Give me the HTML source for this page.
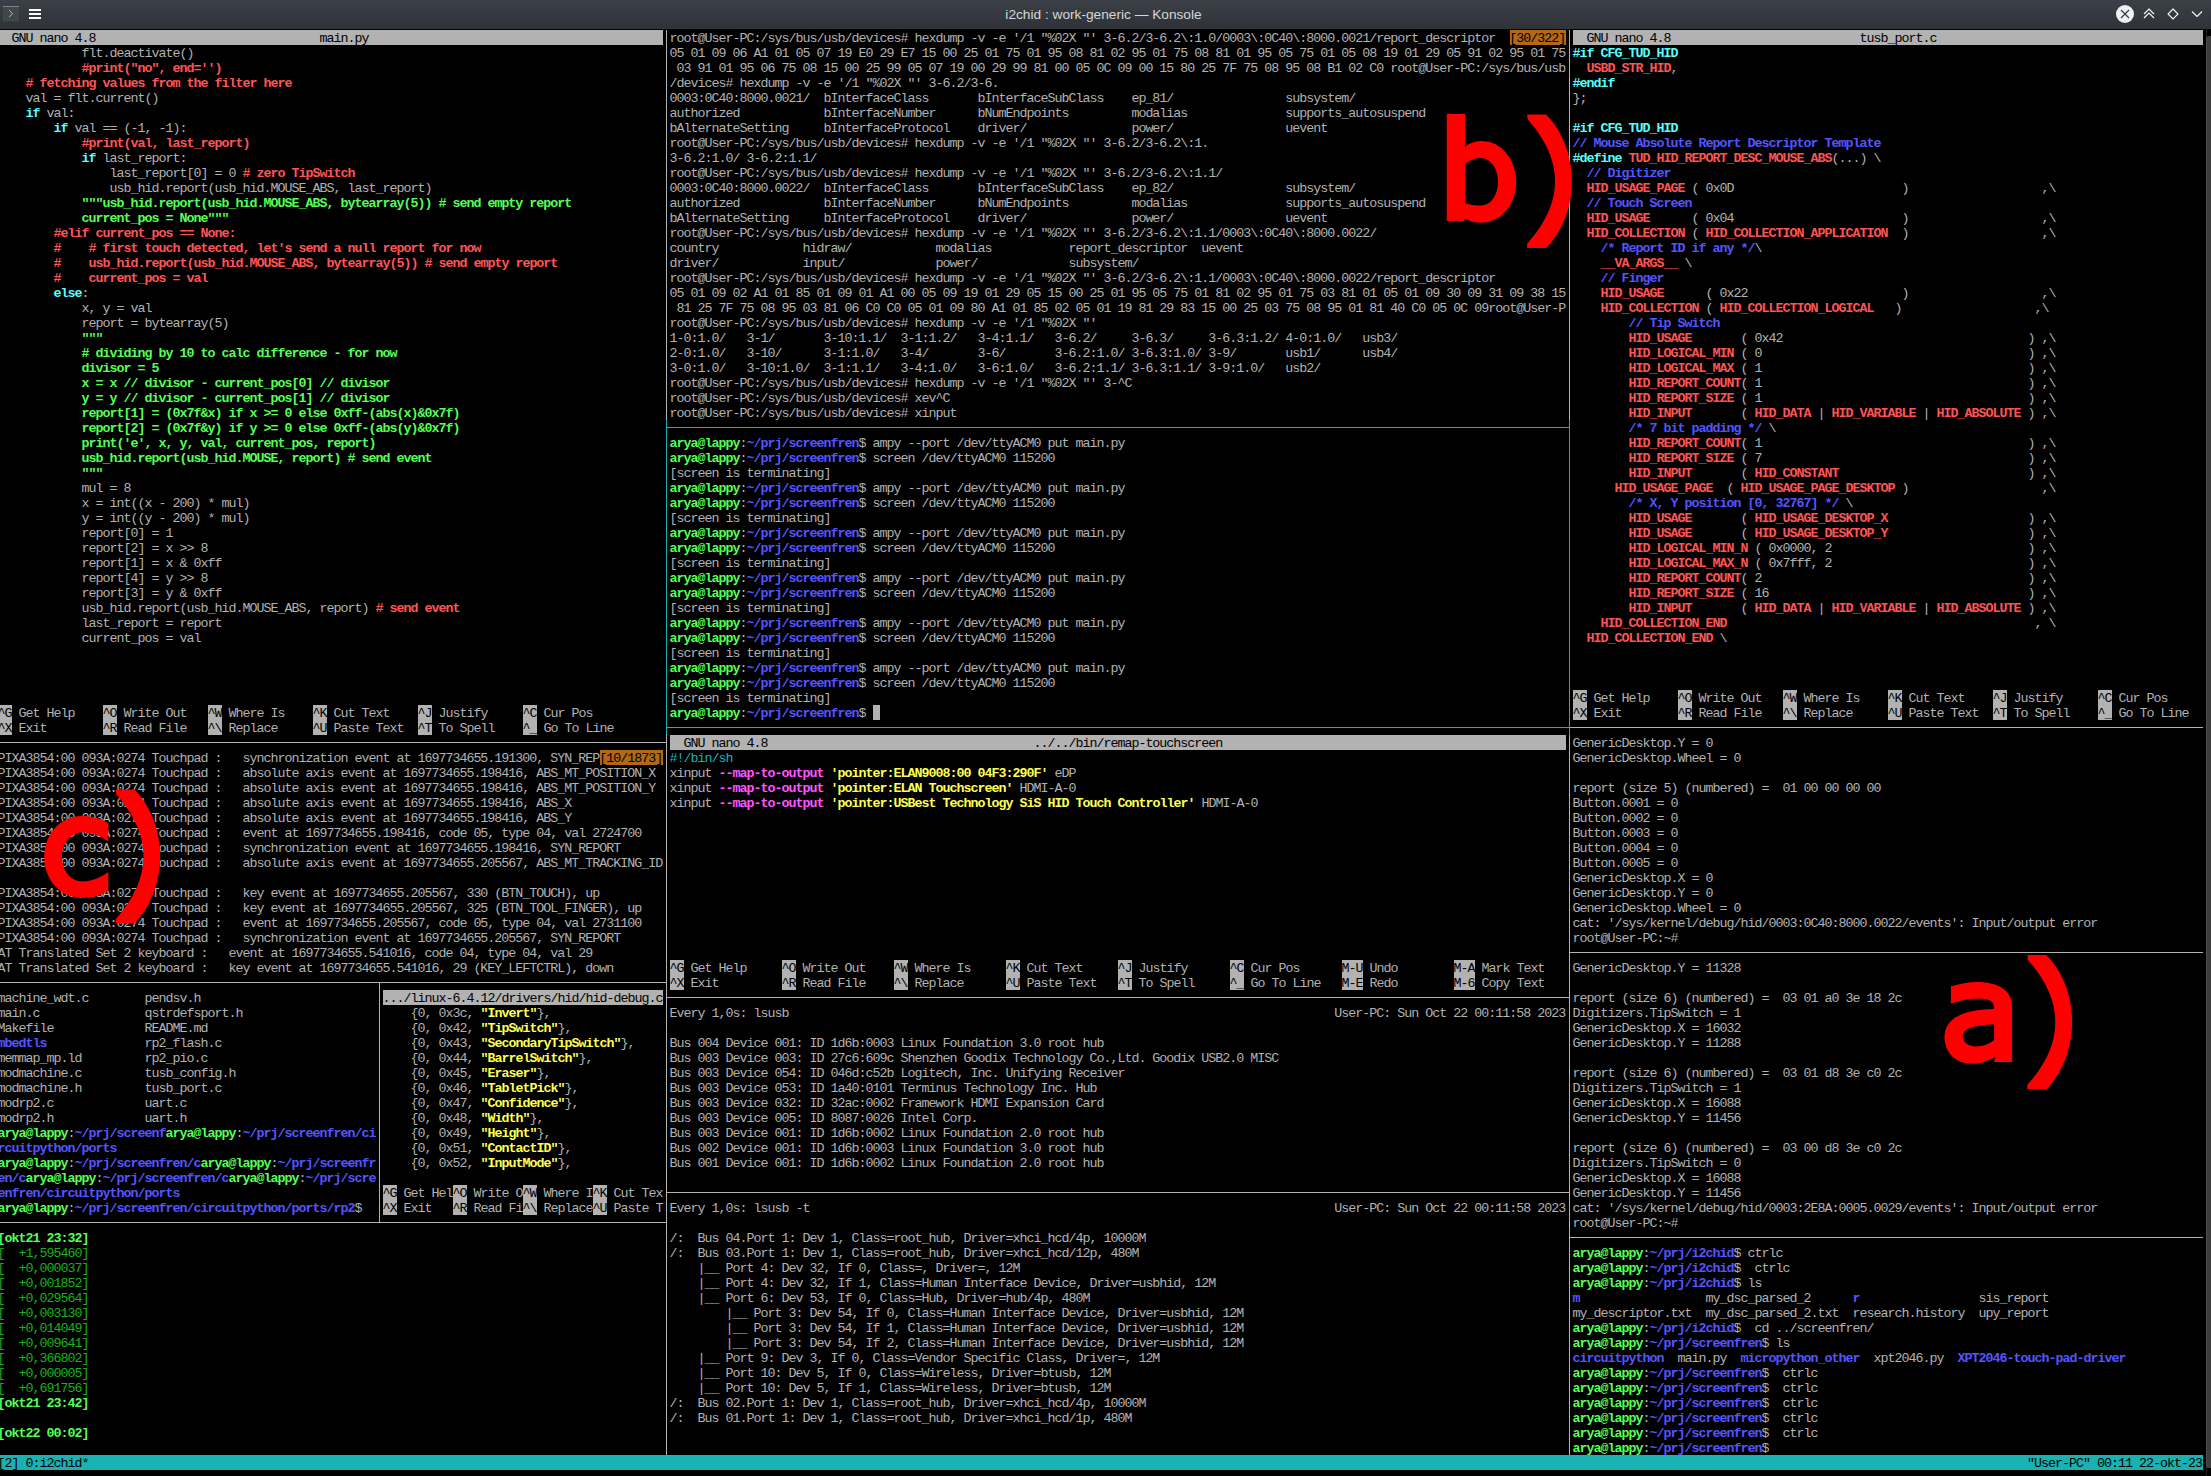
<!DOCTYPE html><html><head><meta charset="utf-8"><title>i2chid : work-generic - Konsole</title><style>
*{margin:0;padding:0}
html,body{width:2211px;height:1476px;overflow:hidden;background:#000}
body{position:relative}
#t{position:absolute;left:0;top:0;width:2211px;height:29px;background:linear-gradient(#3b3f47,#2f3338)}
#tt{position:absolute;left:-2px;top:1px;width:2211px;height:28px;line-height:28px;text-align:center;font-family:"Liberation Sans",sans-serif;font-size:13.7px;color:#d6d7d8}
.r{position:absolute;white-space:pre;height:15px;line-height:15px;font-family:"Liberation Mono",monospace;font-size:13.33px;letter-spacing:-1px;color:#b2b2b2}
.b{position:absolute;height:15px}
.l{position:absolute}
i{font-style:normal}
.G{color:#54ff54;font-weight:bold}
.g{color:#18b218}
.B{color:#5454ff;font-weight:bold}
.R{color:#ff5454;font-weight:bold}
.C{color:#54ffff;font-weight:bold}
.c{color:#18b2b2}
.Y{color:#ffff54;font-weight:bold}
.M{color:#ff54ff;font-weight:bold}
.H,.K,.O,.S{color:#000}
#sb{position:absolute;left:2206px;top:36px;width:5px;height:1432px;background:#3d3d3d;border-radius:3px 0 0 3px;border-left:1px solid #4d4d4d}
#sl{position:absolute;left:2206px;top:29px;width:1px;height:1447px;background:#1c1c1c}
</style></head><body>
<div id="t"></div><div id="tt">i2chid : work-generic — Konsole</div>
<svg style="position:absolute;left:0;top:0" width="2211" height="29">
<rect x="3" y="6" width="16" height="15.5" fill="#3e4846"/>
<rect x="3" y="6" width="16" height="1" fill="#7d8784"/>
<path d="M9.2 10.2 L12.6 13.6 L9.2 17" stroke="#c5cbc9" stroke-width="0.9" fill="none"/>
<g fill="#fcfcfc"><rect x="29" y="9" width="12" height="2"/><rect x="29" y="13" width="12" height="2"/><rect x="29" y="17" width="12" height="2"/></g>
<circle cx="2125" cy="14" r="9" fill="#eff0f1"/>
<path d="M2121 10 L2129 18 M2129 10 L2121 18" stroke="#31363b" stroke-width="1.1"/>
<path d="M2144 14 L2149 9 L2154 14 M2144 18 L2149 13 L2154 18" stroke="#fcfcfc" stroke-width="1.1" fill="none"/>
<path d="M2173 9 L2178 14 L2173 19 L2168 14 Z" stroke="#fcfcfc" stroke-width="1.1" fill="none"/>
<path d="M2192 11.5 L2197 16.5 L2202 11.5" stroke="#fcfcfc" stroke-width="1.1" fill="none"/>
</svg>
<div id="sl"></div><div id="sb"></div>
<div class="b" style="left:-2.5px;top:30px;width:665px;background:#b2b2b2"></div><div class="b" style="left:-2.5px;top:705px;width:14px;background:#b2b2b2"></div><div class="b" style="left:102.5px;top:705px;width:14px;background:#b2b2b2"></div><div class="b" style="left:207.5px;top:705px;width:14px;background:#b2b2b2"></div><div class="b" style="left:312.5px;top:705px;width:14px;background:#b2b2b2"></div><div class="b" style="left:417.5px;top:705px;width:14px;background:#b2b2b2"></div><div class="b" style="left:522.5px;top:705px;width:14px;background:#b2b2b2"></div><div class="b" style="left:-2.5px;top:720px;width:14px;background:#b2b2b2"></div><div class="b" style="left:102.5px;top:720px;width:14px;background:#b2b2b2"></div><div class="b" style="left:207.5px;top:720px;width:14px;background:#b2b2b2"></div><div class="b" style="left:312.5px;top:720px;width:14px;background:#b2b2b2"></div><div class="b" style="left:417.5px;top:720px;width:14px;background:#b2b2b2"></div><div class="b" style="left:522.5px;top:720px;width:14px;background:#b2b2b2"></div><div class="b" style="left:599.5px;top:750px;width:63px;background:#b26818"></div><div class="b" style="left:382.5px;top:990px;width:280px;background:#b2b2b2"></div><div class="b" style="left:382.5px;top:1185px;width:14px;background:#b2b2b2"></div><div class="b" style="left:452.5px;top:1185px;width:14px;background:#b2b2b2"></div><div class="b" style="left:522.5px;top:1185px;width:14px;background:#b2b2b2"></div><div class="b" style="left:592.5px;top:1185px;width:14px;background:#b2b2b2"></div><div class="b" style="left:382.5px;top:1200px;width:14px;background:#b2b2b2"></div><div class="b" style="left:452.5px;top:1200px;width:14px;background:#b2b2b2"></div><div class="b" style="left:522.5px;top:1200px;width:14px;background:#b2b2b2"></div><div class="b" style="left:592.5px;top:1200px;width:14px;background:#b2b2b2"></div><div class="b" style="left:1509.5px;top:30px;width:56px;background:#b26818"></div><div class="b" style="left:669.5px;top:735px;width:896px;background:#b2b2b2"></div><div class="b" style="left:669.5px;top:960px;width:14px;background:#b2b2b2"></div><div class="b" style="left:781.5px;top:960px;width:14px;background:#b2b2b2"></div><div class="b" style="left:893.5px;top:960px;width:14px;background:#b2b2b2"></div><div class="b" style="left:1005.5px;top:960px;width:14px;background:#b2b2b2"></div><div class="b" style="left:1117.5px;top:960px;width:14px;background:#b2b2b2"></div><div class="b" style="left:1229.5px;top:960px;width:14px;background:#b2b2b2"></div><div class="b" style="left:1341.5px;top:960px;width:21px;background:#b2b2b2"></div><div class="b" style="left:1453.5px;top:960px;width:21px;background:#b2b2b2"></div><div class="b" style="left:669.5px;top:975px;width:14px;background:#b2b2b2"></div><div class="b" style="left:781.5px;top:975px;width:14px;background:#b2b2b2"></div><div class="b" style="left:893.5px;top:975px;width:14px;background:#b2b2b2"></div><div class="b" style="left:1005.5px;top:975px;width:14px;background:#b2b2b2"></div><div class="b" style="left:1117.5px;top:975px;width:14px;background:#b2b2b2"></div><div class="b" style="left:1229.5px;top:975px;width:14px;background:#b2b2b2"></div><div class="b" style="left:1341.5px;top:975px;width:21px;background:#b2b2b2"></div><div class="b" style="left:1453.5px;top:975px;width:21px;background:#b2b2b2"></div><div class="b" style="left:1572.5px;top:30px;width:630px;background:#b2b2b2"></div><div class="b" style="left:1572.5px;top:690px;width:14px;background:#b2b2b2"></div><div class="b" style="left:1677.5px;top:690px;width:14px;background:#b2b2b2"></div><div class="b" style="left:1782.5px;top:690px;width:14px;background:#b2b2b2"></div><div class="b" style="left:1887.5px;top:690px;width:14px;background:#b2b2b2"></div><div class="b" style="left:1992.5px;top:690px;width:14px;background:#b2b2b2"></div><div class="b" style="left:2097.5px;top:690px;width:14px;background:#b2b2b2"></div><div class="b" style="left:1572.5px;top:705px;width:14px;background:#b2b2b2"></div><div class="b" style="left:1677.5px;top:705px;width:14px;background:#b2b2b2"></div><div class="b" style="left:1782.5px;top:705px;width:14px;background:#b2b2b2"></div><div class="b" style="left:1887.5px;top:705px;width:14px;background:#b2b2b2"></div><div class="b" style="left:1992.5px;top:705px;width:14px;background:#b2b2b2"></div><div class="b" style="left:2097.5px;top:705px;width:14px;background:#b2b2b2"></div><div class="b" style="left:-2.5px;top:1455px;width:2205px;background:#18b2b2"></div><div class="b" style="left:872.5px;top:705px;width:7px;background:#b2b2b2"></div>
<div class="r" style="left:-2.5px;top:31px"><i class="H">  GNU nano 4.8                                main.py                                          </i></div><div class="r" style="left:-2.5px;top:46px">            flt.deactivate()</div><div class="r" style="left:-2.5px;top:61px">            <i class="R">#print("no", end='')</i></div><div class="r" style="left:-2.5px;top:76px">    <i class="R"># fetching values from the filter here</i></div><div class="r" style="left:-2.5px;top:91px">    val = flt.current()</div><div class="r" style="left:-2.5px;top:106px">    <i class="C">if</i> val:</div><div class="r" style="left:-2.5px;top:121px">        <i class="C">if</i> val == (-1, -1):</div><div class="r" style="left:-2.5px;top:136px">            <i class="R">#print(val, last_report)</i></div><div class="r" style="left:-2.5px;top:151px">            <i class="C">if</i> last_report:</div><div class="r" style="left:-2.5px;top:166px">                last_report[0] = 0 <i class="R"># zero TipSwitch</i></div><div class="r" style="left:-2.5px;top:181px">                usb_hid.report(usb_hid.MOUSE_ABS, last_report)</div><div class="r" style="left:-2.5px;top:196px">            <i class="G">"""usb_hid.report(usb_hid.MOUSE_ABS, bytearray(5)) # send empty report</i></div><div class="r" style="left:-2.5px;top:211px">            <i class="G">current_pos = None"""</i></div><div class="r" style="left:-2.5px;top:226px">        <i class="R">#elif current_pos == None:</i></div><div class="r" style="left:-2.5px;top:241px">        <i class="R">#    # first touch detected, let's send a null report for now</i></div><div class="r" style="left:-2.5px;top:256px">        <i class="R">#    usb_hid.report(usb_hid.MOUSE_ABS, bytearray(5)) # send empty report</i></div><div class="r" style="left:-2.5px;top:271px">        <i class="R">#    current_pos = val</i></div><div class="r" style="left:-2.5px;top:286px">        <i class="C">else</i>:</div><div class="r" style="left:-2.5px;top:301px">            x, y = val</div><div class="r" style="left:-2.5px;top:316px">            report = bytearray(5)</div><div class="r" style="left:-2.5px;top:331px">            <i class="G">"""</i></div><div class="r" style="left:-2.5px;top:346px">            <i class="G"># dividing by 10 to calc difference - for now</i></div><div class="r" style="left:-2.5px;top:361px">            <i class="G">divisor = 5</i></div><div class="r" style="left:-2.5px;top:376px">            <i class="G">x = x // divisor - current_pos[0] // divisor</i></div><div class="r" style="left:-2.5px;top:391px">            <i class="G">y = y // divisor - current_pos[1] // divisor</i></div><div class="r" style="left:-2.5px;top:406px">            <i class="G">report[1] = (0x7f&amp;x) if x &gt;= 0 else 0xff-(abs(x)&amp;0x7f)</i></div><div class="r" style="left:-2.5px;top:421px">            <i class="G">report[2] = (0x7f&amp;y) if y &gt;= 0 else 0xff-(abs(y)&amp;0x7f)</i></div><div class="r" style="left:-2.5px;top:436px">            <i class="G">print('e', x, y, val, current_pos, report)</i></div><div class="r" style="left:-2.5px;top:451px">            <i class="G">usb_hid.report(usb_hid.MOUSE, report) # send event</i></div><div class="r" style="left:-2.5px;top:466px">            <i class="G">"""</i></div><div class="r" style="left:-2.5px;top:481px">            mul = 8</div><div class="r" style="left:-2.5px;top:496px">            x = int((x - 200) * mul)</div><div class="r" style="left:-2.5px;top:511px">            y = int((y - 200) * mul)</div><div class="r" style="left:-2.5px;top:526px">            report[0] = 1</div><div class="r" style="left:-2.5px;top:541px">            report[2] = x &gt;&gt; 8</div><div class="r" style="left:-2.5px;top:556px">            report[1] = x &amp; 0xff</div><div class="r" style="left:-2.5px;top:571px">            report[4] = y &gt;&gt; 8</div><div class="r" style="left:-2.5px;top:586px">            report[3] = y &amp; 0xff</div><div class="r" style="left:-2.5px;top:601px">            usb_hid.report(usb_hid.MOUSE_ABS, report) <i class="R"># send event</i></div><div class="r" style="left:-2.5px;top:616px">            last_report = report</div><div class="r" style="left:-2.5px;top:631px">            current_pos = val</div><div class="r" style="left:-2.5px;top:706px"><i class="K">^G</i> Get Help    <i class="K">^O</i> Write Out   <i class="K">^W</i> Where Is    <i class="K">^K</i> Cut Text    <i class="K">^J</i> Justify     <i class="K">^C</i> Cur Pos</div><div class="r" style="left:-2.5px;top:721px"><i class="K">^X</i> Exit        <i class="K">^R</i> Read File   <i class="K">^\</i> Replace     <i class="K">^U</i> Paste Text  <i class="K">^T</i> To Spell    <i class="K">^_</i> Go To Line</div><div class="r" style="left:-2.5px;top:751px">PIXA3854:00 093A:0274 Touchpad :   synchronization event at 1697734655.191300, SYN_REP<i class="O">[10/1873]</i></div><div class="r" style="left:-2.5px;top:766px">PIXA3854:00 093A:0274 Touchpad :   absolute axis event at 1697734655.198416, ABS_MT_POSITION_X</div><div class="r" style="left:-2.5px;top:781px">PIXA3854:00 093A:0274 Touchpad :   absolute axis event at 1697734655.198416, ABS_MT_POSITION_Y</div><div class="r" style="left:-2.5px;top:796px">PIXA3854:00 093A:0274 Touchpad :   absolute axis event at 1697734655.198416, ABS_X</div><div class="r" style="left:-2.5px;top:811px">PIXA3854:00 093A:0274 Touchpad :   absolute axis event at 1697734655.198416, ABS_Y</div><div class="r" style="left:-2.5px;top:826px">PIXA3854:00 093A:0274 Touchpad :   event at 1697734655.198416, code 05, type 04, val 2724700</div><div class="r" style="left:-2.5px;top:841px">PIXA3854:00 093A:0274 Touchpad :   synchronization event at 1697734655.198416, SYN_REPORT</div><div class="r" style="left:-2.5px;top:856px">PIXA3854:00 093A:0274 Touchpad :   absolute axis event at 1697734655.205567, ABS_MT_TRACKING_ID</div><div class="r" style="left:-2.5px;top:886px">PIXA3854:00 093A:0274 Touchpad :   key event at 1697734655.205567, 330 (BTN_TOUCH), up</div><div class="r" style="left:-2.5px;top:901px">PIXA3854:00 093A:0274 Touchpad :   key event at 1697734655.205567, 325 (BTN_TOOL_FINGER), up</div><div class="r" style="left:-2.5px;top:916px">PIXA3854:00 093A:0274 Touchpad :   event at 1697734655.205567, code 05, type 04, val 2731100</div><div class="r" style="left:-2.5px;top:931px">PIXA3854:00 093A:0274 Touchpad :   synchronization event at 1697734655.205567, SYN_REPORT</div><div class="r" style="left:-2.5px;top:946px">AT Translated Set 2 keyboard :   event at 1697734655.541016, code 04, type 04, val 29</div><div class="r" style="left:-2.5px;top:961px">AT Translated Set 2 keyboard :   key event at 1697734655.541016, 29 (KEY_LEFTCTRL), down</div><div class="r" style="left:-2.5px;top:991px">machine_wdt.c        pendsv.h</div><div class="r" style="left:-2.5px;top:1006px">main.c               qstrdefsport.h</div><div class="r" style="left:-2.5px;top:1021px">Makefile             README.md</div><div class="r" style="left:-2.5px;top:1036px"><i class="B">mbedtls</i>              rp2_flash.c</div><div class="r" style="left:-2.5px;top:1051px">memmap_mp.ld         rp2_pio.c</div><div class="r" style="left:-2.5px;top:1066px">modmachine.c         tusb_config.h</div><div class="r" style="left:-2.5px;top:1081px">modmachine.h         tusb_port.c</div><div class="r" style="left:-2.5px;top:1096px">modrp2.c             uart.c</div><div class="r" style="left:-2.5px;top:1111px">modrp2.h             uart.h</div><div class="r" style="left:-2.5px;top:1126px"><i class="G">arya@lappy</i>:<i class="B">~/prj/screenf</i><i class="G">arya@lappy</i>:<i class="B">~/prj/screenfren/ci</i></div><div class="r" style="left:-2.5px;top:1141px"><i class="B">rcuitpython/ports</i></div><div class="r" style="left:-2.5px;top:1156px"><i class="G">arya@lappy</i>:<i class="B">~/prj/screenfren/c</i><i class="G">arya@lappy</i>:<i class="B">~/prj/screenfr</i></div><div class="r" style="left:-2.5px;top:1171px"><i class="B">en/c</i><i class="G">arya@lappy</i>:<i class="B">~/prj/screenfren/c</i><i class="G">arya@lappy</i>:<i class="B">~/prj/scre</i></div><div class="r" style="left:-2.5px;top:1186px"><i class="B">enfren/circuitpython/ports</i></div><div class="r" style="left:-2.5px;top:1201px"><i class="G">arya@lappy</i>:<i class="B">~/prj/screenfren/circuitpython/ports/rp2</i>$</div><div class="r" style="left:382.5px;top:991px"><i class="H">.../linux-6.4.12/drivers/hid/hid-debug.c</i></div><div class="r" style="left:382.5px;top:1006px">    {0, 0x3c, <i class="Y">"Invert"</i>},</div><div class="r" style="left:382.5px;top:1021px">    {0, 0x42, <i class="Y">"TipSwitch"</i>},</div><div class="r" style="left:382.5px;top:1036px">    {0, 0x43, <i class="Y">"SecondaryTipSwitch"</i>},</div><div class="r" style="left:382.5px;top:1051px">    {0, 0x44, <i class="Y">"BarrelSwitch"</i>},</div><div class="r" style="left:382.5px;top:1066px">    {0, 0x45, <i class="Y">"Eraser"</i>},</div><div class="r" style="left:382.5px;top:1081px">    {0, 0x46, <i class="Y">"TabletPick"</i>},</div><div class="r" style="left:382.5px;top:1096px">    {0, 0x47, <i class="Y">"Confidence"</i>},</div><div class="r" style="left:382.5px;top:1111px">    {0, 0x48, <i class="Y">"Width"</i>},</div><div class="r" style="left:382.5px;top:1126px">    {0, 0x49, <i class="Y">"Height"</i>},</div><div class="r" style="left:382.5px;top:1141px">    {0, 0x51, <i class="Y">"ContactID"</i>},</div><div class="r" style="left:382.5px;top:1156px">    {0, 0x52, <i class="Y">"InputMode"</i>},</div><div class="r" style="left:382.5px;top:1186px"><i class="K">^G</i> Get Hel<i class="K">^O</i> Write O<i class="K">^W</i> Where I<i class="K">^K</i> Cut Tex</div><div class="r" style="left:382.5px;top:1201px"><i class="K">^X</i> Exit   <i class="K">^R</i> Read Fi<i class="K">^\</i> Replace<i class="K">^U</i> Paste T</div><div class="r" style="left:-2.5px;top:1231px"><i class="G">[okt21 23:32]</i></div><div class="r" style="left:-2.5px;top:1246px"><i class="g">[  +1,595460]</i></div><div class="r" style="left:-2.5px;top:1261px"><i class="g">[  +0,000037]</i></div><div class="r" style="left:-2.5px;top:1276px"><i class="g">[  +0,001852]</i></div><div class="r" style="left:-2.5px;top:1291px"><i class="g">[  +0,029564]</i></div><div class="r" style="left:-2.5px;top:1306px"><i class="g">[  +0,003130]</i></div><div class="r" style="left:-2.5px;top:1321px"><i class="g">[  +0,014049]</i></div><div class="r" style="left:-2.5px;top:1336px"><i class="g">[  +0,009641]</i></div><div class="r" style="left:-2.5px;top:1351px"><i class="g">[  +0,366802]</i></div><div class="r" style="left:-2.5px;top:1366px"><i class="g">[  +0,000005]</i></div><div class="r" style="left:-2.5px;top:1381px"><i class="g">[  +0,691756]</i></div><div class="r" style="left:-2.5px;top:1396px"><i class="G">[okt21 23:42]</i></div><div class="r" style="left:-2.5px;top:1426px"><i class="G">[okt22 00:02]</i></div><div class="r" style="left:669.5px;top:31px">root@User-PC:/sys/bus/usb/devices# hexdump -v -e '/1 "%02X "' 3-6.2/3-6.2\:1.0/0003\:0C40\:8000.0021/report_descriptor  <i class="O">[30/322]</i></div><div class="r" style="left:669.5px;top:46px">05 01 09 06 A1 01 05 07 19 E0 29 E7 15 00 25 01 75 01 95 08 81 02 95 01 75 08 81 01 95 05 75 01 05 08 19 01 29 05 91 02 95 01 75</div><div class="r" style="left:669.5px;top:61px"> 03 91 01 95 06 75 08 15 00 25 99 05 07 19 00 29 99 81 00 05 0C 09 00 15 80 25 7F 75 08 95 08 B1 02 C0 root@User-PC:/sys/bus/usb</div><div class="r" style="left:669.5px;top:76px">/devices# hexdump -v -e '/1 "%02X "' 3-6.2/3-6.</div><div class="r" style="left:669.5px;top:91px">0003:0C40:8000.0021/  bInterfaceClass       bInterfaceSubClass    ep_81/                subsystem/</div><div class="r" style="left:669.5px;top:106px">authorized            bInterfaceNumber      bNumEndpoints         modalias              supports_autosuspend</div><div class="r" style="left:669.5px;top:121px">bAlternateSetting     bInterfaceProtocol    driver/               power/                uevent</div><div class="r" style="left:669.5px;top:136px">root@User-PC:/sys/bus/usb/devices# hexdump -v -e '/1 "%02X "' 3-6.2/3-6.2\:1.</div><div class="r" style="left:669.5px;top:151px">3-6.2:1.0/ 3-6.2:1.1/</div><div class="r" style="left:669.5px;top:166px">root@User-PC:/sys/bus/usb/devices# hexdump -v -e '/1 "%02X "' 3-6.2/3-6.2\:1.1/</div><div class="r" style="left:669.5px;top:181px">0003:0C40:8000.0022/  bInterfaceClass       bInterfaceSubClass    ep_82/                subsystem/</div><div class="r" style="left:669.5px;top:196px">authorized            bInterfaceNumber      bNumEndpoints         modalias              supports_autosuspend</div><div class="r" style="left:669.5px;top:211px">bAlternateSetting     bInterfaceProtocol    driver/               power/                uevent</div><div class="r" style="left:669.5px;top:226px">root@User-PC:/sys/bus/usb/devices# hexdump -v -e '/1 "%02X "' 3-6.2/3-6.2\:1.1/0003\:0C40\:8000.0022/</div><div class="r" style="left:669.5px;top:241px">country            hidraw/            modalias           report_descriptor  uevent</div><div class="r" style="left:669.5px;top:256px">driver/            input/             power/             subsystem/</div><div class="r" style="left:669.5px;top:271px">root@User-PC:/sys/bus/usb/devices# hexdump -v -e '/1 "%02X "' 3-6.2/3-6.2\:1.1/0003\:0C40\:8000.0022/report_descriptor</div><div class="r" style="left:669.5px;top:286px">05 01 09 02 A1 01 85 01 09 01 A1 00 05 09 19 01 29 05 15 00 25 01 95 05 75 01 81 02 95 01 75 03 81 01 05 01 09 30 09 31 09 38 15</div><div class="r" style="left:669.5px;top:301px"> 81 25 7F 75 08 95 03 81 06 C0 C0 05 01 09 80 A1 01 85 02 05 01 19 81 29 83 15 00 25 03 75 08 95 01 81 40 C0 05 0C 09root@User-P</div><div class="r" style="left:669.5px;top:316px">root@User-PC:/sys/bus/usb/devices# hexdump -v -e '/1 "%02X "'</div><div class="r" style="left:669.5px;top:331px">1-0:1.0/   3-1/       3-10:1.1/  3-1:1.2/   3-4:1.1/   3-6.2/     3-6.3/     3-6.3:1.2/ 4-0:1.0/   usb3/</div><div class="r" style="left:669.5px;top:346px">2-0:1.0/   3-10/      3-1:1.0/   3-4/       3-6/       3-6.2:1.0/ 3-6.3:1.0/ 3-9/       usb1/      usb4/</div><div class="r" style="left:669.5px;top:361px">3-0:1.0/   3-10:1.0/  3-1:1.1/   3-4:1.0/   3-6:1.0/   3-6.2:1.1/ 3-6.3:1.1/ 3-9:1.0/   usb2/</div><div class="r" style="left:669.5px;top:376px">root@User-PC:/sys/bus/usb/devices# hexdump -v -e '/1 "%02X "' 3-^C</div><div class="r" style="left:669.5px;top:391px">root@User-PC:/sys/bus/usb/devices# xev^C</div><div class="r" style="left:669.5px;top:406px">root@User-PC:/sys/bus/usb/devices# xinput</div><div class="r" style="left:669.5px;top:436px"><i class="G">arya@lappy</i>:<i class="B">~/prj/screenfren</i>$ ampy --port /dev/ttyACM0 put main.py</div><div class="r" style="left:669.5px;top:451px"><i class="G">arya@lappy</i>:<i class="B">~/prj/screenfren</i>$ screen /dev/ttyACM0 115200</div><div class="r" style="left:669.5px;top:466px">[screen is terminating]</div><div class="r" style="left:669.5px;top:481px"><i class="G">arya@lappy</i>:<i class="B">~/prj/screenfren</i>$ ampy --port /dev/ttyACM0 put main.py</div><div class="r" style="left:669.5px;top:496px"><i class="G">arya@lappy</i>:<i class="B">~/prj/screenfren</i>$ screen /dev/ttyACM0 115200</div><div class="r" style="left:669.5px;top:511px">[screen is terminating]</div><div class="r" style="left:669.5px;top:526px"><i class="G">arya@lappy</i>:<i class="B">~/prj/screenfren</i>$ ampy --port /dev/ttyACM0 put main.py</div><div class="r" style="left:669.5px;top:541px"><i class="G">arya@lappy</i>:<i class="B">~/prj/screenfren</i>$ screen /dev/ttyACM0 115200</div><div class="r" style="left:669.5px;top:556px">[screen is terminating]</div><div class="r" style="left:669.5px;top:571px"><i class="G">arya@lappy</i>:<i class="B">~/prj/screenfren</i>$ ampy --port /dev/ttyACM0 put main.py</div><div class="r" style="left:669.5px;top:586px"><i class="G">arya@lappy</i>:<i class="B">~/prj/screenfren</i>$ screen /dev/ttyACM0 115200</div><div class="r" style="left:669.5px;top:601px">[screen is terminating]</div><div class="r" style="left:669.5px;top:616px"><i class="G">arya@lappy</i>:<i class="B">~/prj/screenfren</i>$ ampy --port /dev/ttyACM0 put main.py</div><div class="r" style="left:669.5px;top:631px"><i class="G">arya@lappy</i>:<i class="B">~/prj/screenfren</i>$ screen /dev/ttyACM0 115200</div><div class="r" style="left:669.5px;top:646px">[screen is terminating]</div><div class="r" style="left:669.5px;top:661px"><i class="G">arya@lappy</i>:<i class="B">~/prj/screenfren</i>$ ampy --port /dev/ttyACM0 put main.py</div><div class="r" style="left:669.5px;top:676px"><i class="G">arya@lappy</i>:<i class="B">~/prj/screenfren</i>$ screen /dev/ttyACM0 115200</div><div class="r" style="left:669.5px;top:691px">[screen is terminating]</div><div class="r" style="left:669.5px;top:706px"><i class="G">arya@lappy</i>:<i class="B">~/prj/screenfren</i>$ </div><div class="r" style="left:669.5px;top:736px"><i class="H">  GNU nano 4.8                                      ../../bin/remap-touchscreen                                                 </i></div><div class="r" style="left:669.5px;top:751px"><i class="c">#!/bin/sh</i></div><div class="r" style="left:669.5px;top:766px">xinput <i class="M">--map-to-output</i> <i class="Y">'pointer:ELAN9008:00 04F3:290F'</i> eDP</div><div class="r" style="left:669.5px;top:781px">xinput <i class="M">--map-to-output</i> <i class="Y">'pointer:ELAN Touchscreen'</i> HDMI-A-0</div><div class="r" style="left:669.5px;top:796px">xinput <i class="M">--map-to-output</i> <i class="Y">'pointer:USBest Technology SiS HID Touch Controller'</i> HDMI-A-0</div><div class="r" style="left:669.5px;top:961px"><i class="K">^G</i> Get Help     <i class="K">^O</i> Write Out    <i class="K">^W</i> Where Is     <i class="K">^K</i> Cut Text     <i class="K">^J</i> Justify      <i class="K">^C</i> Cur Pos      <i class="K">M-U</i> Undo        <i class="K">M-A</i> Mark Text</div><div class="r" style="left:669.5px;top:976px"><i class="K">^X</i> Exit         <i class="K">^R</i> Read File    <i class="K">^\</i> Replace      <i class="K">^U</i> Paste Text   <i class="K">^T</i> To Spell     <i class="K">^_</i> Go To Line   <i class="K">M-E</i> Redo        <i class="K">M-6</i> Copy Text</div><div class="r" style="left:669.5px;top:1006px">Every 1,0s: lsusb                                                                              User-PC: Sun Oct 22 00:11:58 2023</div><div class="r" style="left:669.5px;top:1036px">Bus 004 Device 001: ID 1d6b:0003 Linux Foundation 3.0 root hub</div><div class="r" style="left:669.5px;top:1051px">Bus 003 Device 003: ID 27c6:609c Shenzhen Goodix Technology Co.,Ltd. Goodix USB2.0 MISC</div><div class="r" style="left:669.5px;top:1066px">Bus 003 Device 054: ID 046d:c52b Logitech, Inc. Unifying Receiver</div><div class="r" style="left:669.5px;top:1081px">Bus 003 Device 053: ID 1a40:0101 Terminus Technology Inc. Hub</div><div class="r" style="left:669.5px;top:1096px">Bus 003 Device 032: ID 32ac:0002 Framework HDMI Expansion Card</div><div class="r" style="left:669.5px;top:1111px">Bus 003 Device 005: ID 8087:0026 Intel Corp.</div><div class="r" style="left:669.5px;top:1126px">Bus 003 Device 001: ID 1d6b:0002 Linux Foundation 2.0 root hub</div><div class="r" style="left:669.5px;top:1141px">Bus 002 Device 001: ID 1d6b:0003 Linux Foundation 3.0 root hub</div><div class="r" style="left:669.5px;top:1156px">Bus 001 Device 001: ID 1d6b:0002 Linux Foundation 2.0 root hub</div><div class="r" style="left:669.5px;top:1201px">Every 1,0s: lsusb -t                                                                           User-PC: Sun Oct 22 00:11:58 2023</div><div class="r" style="left:669.5px;top:1231px">/:  Bus 04.Port 1: Dev 1, Class=root_hub, Driver=xhci_hcd/4p, 10000M</div><div class="r" style="left:669.5px;top:1246px">/:  Bus 03.Port 1: Dev 1, Class=root_hub, Driver=xhci_hcd/12p, 480M</div><div class="r" style="left:669.5px;top:1261px">    |__ Port 4: Dev 32, If 0, Class=, Driver=, 12M</div><div class="r" style="left:669.5px;top:1276px">    |__ Port 4: Dev 32, If 1, Class=Human Interface Device, Driver=usbhid, 12M</div><div class="r" style="left:669.5px;top:1291px">    |__ Port 6: Dev 53, If 0, Class=Hub, Driver=hub/4p, 480M</div><div class="r" style="left:669.5px;top:1306px">        |__ Port 3: Dev 54, If 0, Class=Human Interface Device, Driver=usbhid, 12M</div><div class="r" style="left:669.5px;top:1321px">        |__ Port 3: Dev 54, If 1, Class=Human Interface Device, Driver=usbhid, 12M</div><div class="r" style="left:669.5px;top:1336px">        |__ Port 3: Dev 54, If 2, Class=Human Interface Device, Driver=usbhid, 12M</div><div class="r" style="left:669.5px;top:1351px">    |__ Port 9: Dev 3, If 0, Class=Vendor Specific Class, Driver=, 12M</div><div class="r" style="left:669.5px;top:1366px">    |__ Port 10: Dev 5, If 0, Class=Wireless, Driver=btusb, 12M</div><div class="r" style="left:669.5px;top:1381px">    |__ Port 10: Dev 5, If 1, Class=Wireless, Driver=btusb, 12M</div><div class="r" style="left:669.5px;top:1396px">/:  Bus 02.Port 1: Dev 1, Class=root_hub, Driver=xhci_hcd/4p, 10000M</div><div class="r" style="left:669.5px;top:1411px">/:  Bus 01.Port 1: Dev 1, Class=root_hub, Driver=xhci_hcd/1p, 480M</div><div class="r" style="left:1572.5px;top:31px"><i class="H">  GNU nano 4.8                           tusb_port.c                                      </i></div><div class="r" style="left:1572.5px;top:46px"><i class="C">#if CFG_TUD_HID</i></div><div class="r" style="left:1572.5px;top:61px">  <i class="R">USBD_STR_HID</i>,</div><div class="r" style="left:1572.5px;top:76px"><i class="C">#endif</i></div><div class="r" style="left:1572.5px;top:91px">};</div><div class="r" style="left:1572.5px;top:121px"><i class="C">#if CFG_TUD_HID</i></div><div class="r" style="left:1572.5px;top:136px"><i class="B">// Mouse Absolute Report Descriptor Template</i></div><div class="r" style="left:1572.5px;top:151px"><i class="C">#define</i> <i class="R">TUD_HID_REPORT_DESC_MOUSE_ABS</i>(...) \</div><div class="r" style="left:1572.5px;top:166px">  <i class="B">// Digitizer</i></div><div class="r" style="left:1572.5px;top:181px">  <i class="R">HID_USAGE_PAGE</i> ( 0x0D                        )                   ,\</div><div class="r" style="left:1572.5px;top:196px">  <i class="B">// Touch Screen</i></div><div class="r" style="left:1572.5px;top:211px">  <i class="R">HID_USAGE</i>      ( 0x04                        )                   ,\</div><div class="r" style="left:1572.5px;top:226px">  <i class="R">HID_COLLECTION</i> ( <i class="R">HID_COLLECTION_APPLICATION</i>  )                   ,\</div><div class="r" style="left:1572.5px;top:241px">    <i class="B">/* Report ID if any */</i>\</div><div class="r" style="left:1572.5px;top:256px">    <i class="R">__VA_ARGS__</i> \</div><div class="r" style="left:1572.5px;top:271px">    <i class="B">// Finger</i></div><div class="r" style="left:1572.5px;top:286px">    <i class="R">HID_USAGE</i>      ( 0x22                      )                   ,\</div><div class="r" style="left:1572.5px;top:301px">    <i class="R">HID_COLLECTION</i> ( <i class="R">HID_COLLECTION_LOGICAL</i>   )                   ,\</div><div class="r" style="left:1572.5px;top:316px">        <i class="B">// Tip Switch</i></div><div class="r" style="left:1572.5px;top:331px">        <i class="R">HID_USAGE</i>       ( 0x42                                   ) ,\</div><div class="r" style="left:1572.5px;top:346px">        <i class="R">HID_LOGICAL_MIN</i> ( 0                                      ) ,\</div><div class="r" style="left:1572.5px;top:361px">        <i class="R">HID_LOGICAL_MAX</i> ( 1                                      ) ,\</div><div class="r" style="left:1572.5px;top:376px">        <i class="R">HID_REPORT_COUNT</i>( 1                                      ) ,\</div><div class="r" style="left:1572.5px;top:391px">        <i class="R">HID_REPORT_SIZE</i> ( 1                                      ) ,\</div><div class="r" style="left:1572.5px;top:406px">        <i class="R">HID_INPUT</i>       ( <i class="R">HID_DATA</i> | <i class="R">HID_VARIABLE</i> | <i class="R">HID_ABSOLUTE</i> ) ,\</div><div class="r" style="left:1572.5px;top:421px">        <i class="B">/* 7 bit padding */</i> \</div><div class="r" style="left:1572.5px;top:436px">        <i class="R">HID_REPORT_COUNT</i>( 1                                      ) ,\</div><div class="r" style="left:1572.5px;top:451px">        <i class="R">HID_REPORT_SIZE</i> ( 7                                      ) ,\</div><div class="r" style="left:1572.5px;top:466px">        <i class="R">HID_INPUT</i>       ( <i class="R">HID_CONSTANT</i>                           ) ,\</div><div class="r" style="left:1572.5px;top:481px">      <i class="R">HID_USAGE_PAGE</i>  ( <i class="R">HID_USAGE_PAGE_DESKTOP</i> )                   ,\</div><div class="r" style="left:1572.5px;top:496px">        <i class="B">/* X, Y position [0, 32767] */</i> \</div><div class="r" style="left:1572.5px;top:511px">        <i class="R">HID_USAGE</i>       ( <i class="R">HID_USAGE_DESKTOP_X</i>                    ) ,\</div><div class="r" style="left:1572.5px;top:526px">        <i class="R">HID_USAGE</i>       ( <i class="R">HID_USAGE_DESKTOP_Y</i>                    ) ,\</div><div class="r" style="left:1572.5px;top:541px">        <i class="R">HID_LOGICAL_MIN_N</i> ( 0x0000, 2                            ) ,\</div><div class="r" style="left:1572.5px;top:556px">        <i class="R">HID_LOGICAL_MAX_N</i> ( 0x7fff, 2                            ) ,\</div><div class="r" style="left:1572.5px;top:571px">        <i class="R">HID_REPORT_COUNT</i>( 2                                      ) ,\</div><div class="r" style="left:1572.5px;top:586px">        <i class="R">HID_REPORT_SIZE</i> ( 16                                     ) ,\</div><div class="r" style="left:1572.5px;top:601px">        <i class="R">HID_INPUT</i>       ( <i class="R">HID_DATA</i> | <i class="R">HID_VARIABLE</i> | <i class="R">HID_ABSOLUTE</i> ) ,\</div><div class="r" style="left:1572.5px;top:616px">    <i class="R">HID_COLLECTION_END</i>                                            , \</div><div class="r" style="left:1572.5px;top:631px">  <i class="R">HID_COLLECTION_END</i> \</div><div class="r" style="left:1572.5px;top:691px"><i class="K">^G</i> Get Help    <i class="K">^O</i> Write Out   <i class="K">^W</i> Where Is    <i class="K">^K</i> Cut Text    <i class="K">^J</i> Justify     <i class="K">^C</i> Cur Pos</div><div class="r" style="left:1572.5px;top:706px"><i class="K">^X</i> Exit        <i class="K">^R</i> Read File   <i class="K">^\</i> Replace     <i class="K">^U</i> Paste Text  <i class="K">^T</i> To Spell    <i class="K">^_</i> Go To Line</div><div class="r" style="left:1572.5px;top:736px">GenericDesktop.Y = 0</div><div class="r" style="left:1572.5px;top:751px">GenericDesktop.Wheel = 0</div><div class="r" style="left:1572.5px;top:781px">report (size 5) (numbered) =  01 00 00 00 00</div><div class="r" style="left:1572.5px;top:796px">Button.0001 = 0</div><div class="r" style="left:1572.5px;top:811px">Button.0002 = 0</div><div class="r" style="left:1572.5px;top:826px">Button.0003 = 0</div><div class="r" style="left:1572.5px;top:841px">Button.0004 = 0</div><div class="r" style="left:1572.5px;top:856px">Button.0005 = 0</div><div class="r" style="left:1572.5px;top:871px">GenericDesktop.X = 0</div><div class="r" style="left:1572.5px;top:886px">GenericDesktop.Y = 0</div><div class="r" style="left:1572.5px;top:901px">GenericDesktop.Wheel = 0</div><div class="r" style="left:1572.5px;top:916px">cat: '/sys/kernel/debug/hid/0003:0C40:8000.0022/events': Input/output error</div><div class="r" style="left:1572.5px;top:931px">root@User-PC:~#</div><div class="r" style="left:1572.5px;top:961px">GenericDesktop.Y = 11328</div><div class="r" style="left:1572.5px;top:991px">report (size 6) (numbered) =  03 01 a0 3e 18 2c</div><div class="r" style="left:1572.5px;top:1006px">Digitizers.TipSwitch = 1</div><div class="r" style="left:1572.5px;top:1021px">GenericDesktop.X = 16032</div><div class="r" style="left:1572.5px;top:1036px">GenericDesktop.Y = 11288</div><div class="r" style="left:1572.5px;top:1066px">report (size 6) (numbered) =  03 01 d8 3e c0 2c</div><div class="r" style="left:1572.5px;top:1081px">Digitizers.TipSwitch = 1</div><div class="r" style="left:1572.5px;top:1096px">GenericDesktop.X = 16088</div><div class="r" style="left:1572.5px;top:1111px">GenericDesktop.Y = 11456</div><div class="r" style="left:1572.5px;top:1141px">report (size 6) (numbered) =  03 00 d8 3e c0 2c</div><div class="r" style="left:1572.5px;top:1156px">Digitizers.TipSwitch = 0</div><div class="r" style="left:1572.5px;top:1171px">GenericDesktop.X = 16088</div><div class="r" style="left:1572.5px;top:1186px">GenericDesktop.Y = 11456</div><div class="r" style="left:1572.5px;top:1201px">cat: '/sys/kernel/debug/hid/0003:2E8A:0005.0029/events': Input/output error</div><div class="r" style="left:1572.5px;top:1216px">root@User-PC:~#</div><div class="r" style="left:1572.5px;top:1246px"><i class="G">arya@lappy</i>:<i class="B">~/prj/i2chid</i>$ ctrlc</div><div class="r" style="left:1572.5px;top:1261px"><i class="G">arya@lappy</i>:<i class="B">~/prj/i2chid</i>$  ctrlc</div><div class="r" style="left:1572.5px;top:1276px"><i class="G">arya@lappy</i>:<i class="B">~/prj/i2chid</i>$ ls</div><div class="r" style="left:1572.5px;top:1291px"><i class="B">m</i>                  my_dsc_parsed_2      <i class="B">r</i>                 sis_report</div><div class="r" style="left:1572.5px;top:1306px">my_descriptor.txt  my_dsc_parsed_2.txt  research.history  upy_report</div><div class="r" style="left:1572.5px;top:1321px"><i class="G">arya@lappy</i>:<i class="B">~/prj/i2chid</i>$  cd ../screenfren/</div><div class="r" style="left:1572.5px;top:1336px"><i class="G">arya@lappy</i>:<i class="B">~/prj/screenfren</i>$ ls</div><div class="r" style="left:1572.5px;top:1351px"><i class="B">circuitpython</i>  main.py  <i class="B">micropython_other</i>  xpt2046.py  <i class="B">XPT2046-touch-pad-driver</i></div><div class="r" style="left:1572.5px;top:1366px"><i class="G">arya@lappy</i>:<i class="B">~/prj/screenfren</i>$  ctrlc</div><div class="r" style="left:1572.5px;top:1381px"><i class="G">arya@lappy</i>:<i class="B">~/prj/screenfren</i>$  ctrlc</div><div class="r" style="left:1572.5px;top:1396px"><i class="G">arya@lappy</i>:<i class="B">~/prj/screenfren</i>$  ctrlc</div><div class="r" style="left:1572.5px;top:1411px"><i class="G">arya@lappy</i>:<i class="B">~/prj/screenfren</i>$  ctrlc</div><div class="r" style="left:1572.5px;top:1426px"><i class="G">arya@lappy</i>:<i class="B">~/prj/screenfren</i>$  ctrlc</div><div class="r" style="left:1572.5px;top:1441px"><i class="G">arya@lappy</i>:<i class="B">~/prj/screenfren</i>$</div><div class="r" style="left:-2.5px;top:1456px"><i class="S">[2] 0:i2chid*                                                                                                                                                                                                                                                                                     "User-PC" 00:11 22-okt-23</i></div>
<div class="l" style="left:666px;top:30px;width:1px;height:390px;background:#b2b2b2"></div><div class="l" style="left:666px;top:420px;width:1px;height:315px;background:#18b2b2"></div><div class="l" style="left:666px;top:735px;width:1px;height:720px;background:#b2b2b2"></div><div class="l" style="left:1569px;top:30px;width:1px;height:390px;background:#b2b2b2"></div><div class="l" style="left:1569px;top:420px;width:1px;height:315px;background:#18b2b2"></div><div class="l" style="left:1569px;top:735px;width:1px;height:720px;background:#b2b2b2"></div><div class="l" style="left:379px;top:982px;width:1px;height:241px;background:#b2b2b2"></div><div class="l" style="left:0px;top:742px;width:666px;height:1px;background:#b2b2b2"></div><div class="l" style="left:0px;top:982px;width:666px;height:1px;background:#b2b2b2"></div><div class="l" style="left:0px;top:1222px;width:666px;height:1px;background:#b2b2b2"></div><div class="l" style="left:666px;top:427px;width:904px;height:1px;background:#18b2b2"></div><div class="l" style="left:666px;top:727px;width:904px;height:1px;background:#18b2b2"></div><div class="l" style="left:667px;top:997px;width:902px;height:1px;background:#b2b2b2"></div><div class="l" style="left:667px;top:1192px;width:902px;height:1px;background:#b2b2b2"></div><div class="l" style="left:1570px;top:727px;width:633px;height:1px;background:#b2b2b2"></div><div class="l" style="left:1570px;top:952px;width:633px;height:1px;background:#b2b2b2"></div><div class="l" style="left:1570px;top:1237px;width:633px;height:1px;background:#b2b2b2"></div>
<svg style="position:absolute;left:0;top:0" width="2211" height="1476"><g fill="#ff0000"><path fill-rule="evenodd" d="M1446.8 114.1 L1465.1 114.1 L1465.1 146.5 C1470.5 142.6 1476 141 1482 141 A34.3 40.85 0 0 1 1516.3 181.85 A34.3 40.85 0 0 1 1482 222.7 C1475.5 222.7 1469.5 221.2 1464.8 218.4 L1463.6 220.9 L1446.8 220.9 Z M1465.1 164.1 L1465.1 203.2 C1469.5 204.9 1474.5 205.6 1481 205.6 A17 23.75 0 0 0 1498 181.85 A17 23.75 0 0 0 1481 158.1 C1474.5 158.1 1469.5 160.6 1465.1 164.1 Z"/><path d="M1527.10 114.50 L1546.10 114.50 L1546.11 114.50 L1549.54 118.21 L1552.57 121.92 L1555.26 125.62 L1557.66 129.33 L1559.81 133.04 L1561.74 136.75 L1563.45 140.46 L1564.98 144.17 L1566.33 147.88 L1567.51 151.58 L1568.54 155.29 L1569.42 159.00 L1570.16 162.71 L1570.75 166.42 L1571.21 170.12 L1571.54 173.83 L1571.74 177.54 L1571.80 181.25 L1571.74 184.96 L1571.54 188.67 L1571.21 192.38 L1570.75 196.08 L1570.16 199.79 L1569.42 203.50 L1568.54 207.21 L1567.51 210.92 L1566.33 214.62 L1564.98 218.33 L1563.45 222.04 L1561.74 225.75 L1559.81 229.46 L1557.66 233.17 L1555.26 236.87 L1552.57 240.58 L1549.54 244.29 L1546.11 248.00 L1527.10 248.00 L1527.10 243.22 L1527.57 243.22 L1530.55 239.78 L1533.35 236.33 L1535.98 232.89 L1538.44 229.45 L1540.72 226.00 L1542.84 222.56 L1544.78 219.12 L1546.56 215.68 L1548.16 212.23 L1549.60 208.79 L1550.87 205.35 L1551.96 201.91 L1552.89 198.46 L1553.65 195.02 L1554.24 191.58 L1554.66 188.14 L1554.92 184.69 L1555.00 181.25 L1554.92 177.81 L1554.66 174.36 L1554.24 170.92 L1553.65 167.48 L1552.89 164.04 L1551.96 160.59 L1550.87 157.15 L1549.60 153.71 L1548.16 150.27 L1546.56 146.82 L1544.78 143.38 L1542.84 139.94 L1540.72 136.50 L1538.44 133.05 L1535.98 129.61 L1533.35 126.17 L1530.55 122.72 L1527.57 119.28Z"/><path d="M108.3 823.2 C101 818.5 92 816.1 81.2 816.1 C60.8 816.1 44.2 834.4 44.2 857 C44.2 879.6 60.8 897.9 81.2 897.9 C92 897.9 101 895.5 108.3 890.5 L108.3 872.1 C101 877.5 92 881.5 82.5 881.5 C71.1 881.5 61.9 870.7 61.9 857 C61.9 843.3 71.1 832.2 82.5 832.2 C92 832.2 101 836 108.3 841.6 Z"/><path d="M115.80 789.60 L134.63 789.60 L134.64 789.60 L138.04 793.31 L141.04 797.02 L143.71 800.73 L146.09 804.44 L148.22 808.16 L150.13 811.87 L151.83 815.58 L153.34 819.29 L154.68 823.00 L155.85 826.71 L156.87 830.42 L157.74 834.13 L158.47 837.84 L159.06 841.56 L159.52 845.27 L159.84 848.98 L160.04 852.69 L160.10 856.40 L160.04 860.11 L159.84 863.82 L159.52 867.53 L159.06 871.24 L158.47 874.96 L157.74 878.67 L156.87 882.38 L155.85 886.09 L154.68 889.80 L153.34 893.51 L151.83 897.22 L150.13 900.93 L148.22 904.64 L146.09 908.36 L143.71 912.07 L141.04 915.78 L138.04 919.49 L134.64 923.20 L115.80 923.20 L115.80 918.41 L116.27 918.41 L119.22 914.97 L121.99 911.52 L124.60 908.08 L127.03 904.63 L129.30 901.19 L131.40 897.74 L133.33 894.30 L135.09 890.85 L136.68 887.41 L138.10 883.96 L139.35 880.52 L140.44 877.07 L141.36 873.63 L142.11 870.18 L142.70 866.74 L143.12 863.29 L143.37 859.85 L143.45 856.40 L143.37 852.95 L143.12 849.51 L142.70 846.06 L142.11 842.62 L141.36 839.17 L140.44 835.73 L139.35 832.28 L138.10 828.84 L136.68 825.39 L135.09 821.95 L133.33 818.50 L131.40 815.06 L129.30 811.61 L127.03 808.17 L124.60 804.72 L121.99 801.28 L119.22 797.83 L116.27 794.39Z"/><path fill-rule="evenodd" d="M1950.9 986.3 C1960 984 1968 982 1977.3 982 C1999 982 2012.1 991 2012.1 1006 L2012.1 1061.9 L1994.1 1061.9 L1995.3 1056.4 C1988 1061 1980 1063.8 1972.2 1063.8 C1955 1063.8 1944.5 1052 1944.5 1036.8 C1944.5 1027 1950 1019.5 1960 1015 C1968 1011.5 1980 1009.5 1994.1 1009.1 L1993.7 1005.2 C1993.2 1001 1988 998.5 1977.5 998.5 C1968 998.5 1959 1000.8 1950.9 1003.6 Z M1994.1 1024.2 L1994.1 1040 C1989 1044 1983 1046.4 1976 1046.4 C1968 1046.4 1962.8 1042 1962.8 1036.8 C1962.8 1029.5 1970 1025.5 1994.1 1024.2 Z"/><path d="M2027.40 955.10 L2046.40 955.10 L2046.41 955.10 L2049.84 958.82 L2052.87 962.54 L2055.56 966.27 L2057.96 969.99 L2060.11 973.71 L2062.04 977.43 L2063.75 981.16 L2065.28 984.88 L2066.63 988.60 L2067.81 992.32 L2068.84 996.04 L2069.72 999.77 L2070.46 1003.49 L2071.05 1007.21 L2071.51 1010.93 L2071.84 1014.66 L2072.04 1018.38 L2072.10 1022.10 L2072.04 1025.82 L2071.84 1029.54 L2071.51 1033.27 L2071.05 1036.99 L2070.46 1040.71 L2069.72 1044.43 L2068.84 1048.16 L2067.81 1051.88 L2066.63 1055.60 L2065.28 1059.32 L2063.75 1063.04 L2062.04 1066.77 L2060.11 1070.49 L2057.96 1074.21 L2055.56 1077.93 L2052.87 1081.66 L2049.84 1085.38 L2046.41 1089.10 L2027.40 1089.10 L2027.40 1084.30 L2027.87 1084.30 L2030.85 1080.84 L2033.65 1077.39 L2036.28 1073.93 L2038.74 1070.48 L2041.02 1067.02 L2043.14 1063.57 L2045.08 1060.11 L2046.86 1056.66 L2048.46 1053.20 L2049.90 1049.74 L2051.17 1046.29 L2052.26 1042.83 L2053.19 1039.38 L2053.95 1035.92 L2054.54 1032.47 L2054.96 1029.01 L2055.22 1025.56 L2055.30 1022.10 L2055.22 1018.64 L2054.96 1015.19 L2054.54 1011.73 L2053.95 1008.28 L2053.19 1004.82 L2052.26 1001.37 L2051.17 997.91 L2049.90 994.46 L2048.46 991.00 L2046.86 987.54 L2045.08 984.09 L2043.14 980.63 L2041.02 977.18 L2038.74 973.72 L2036.28 970.27 L2033.65 966.81 L2030.85 963.36 L2027.87 959.90Z"/></g></svg>
</body></html>
